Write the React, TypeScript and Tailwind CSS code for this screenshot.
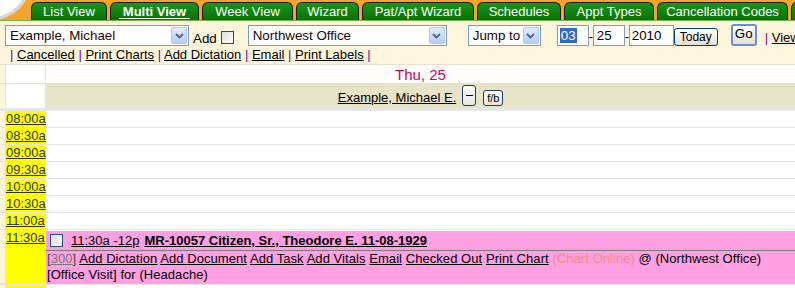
const tabs = [
  { label: 'List View', cls: 'w-[76px]' },
  { label: 'Multi View', cls: 'w-[89px] font-bold', active: true },
  { label: 'Week View', cls: 'w-[91px]' },
  { label: 'Wizard', cls: 'w-[63px]' },
  { label: 'Pat/Apt Wizard', cls: 'w-[112px]' },
  { label: 'Schedules', cls: 'w-[84px]' },
  { label: 'Appt Types', cls: 'w-[90px]' },
  { label: 'Cancellation Codes', cls: 'w-[131px]' },
  { label: '', cls: 'w-[60px]' },
];

const times = ['08:00a', '08:30a', '09:00a', '09:30a', '10:00a', '10:30a', '11:00a'];

const topLinks = ['Cancelled', 'Print Charts', 'Add Dictation', 'Email', 'Print Labels'];

const apptLinks = ['Add Dictation', 'Add Document', 'Add Task', 'Add Vitals', 'Email', 'Checked Out', 'Print Chart'];

function DropArrow() {
  return (
    <div className="w-[16px] h-[17px] mr-[1px] rounded-[2px] border border-[#b4c8f0] bg-linear-to-b from-[#e2ebfe] to-[#b6cbf7] flex items-center justify-center">
      <svg width="9" height="6" viewBox="0 0 9 6">
        <path d="M1 1 L4.5 4.5 L8 1" fill="none" stroke="#4d6185" strokeWidth="1.8" />
      </svg>
    </div>
  );
}

function FakeSelect({ value, width }: { value: string; width: string }) {
  return (
    <div className={`${width} h-[21px] shrink-0 border border-[#7f9db9] bg-white flex items-center justify-between pl-[4px]`}>
      <span className="text-[13.33px] text-[#1a0505] leading-none">{value}</span>
      <DropArrow />
    </div>
  );
}

function XpCheck() {
  return (
    <div className="w-[13px] h-[13px] shrink-0 border border-[#1c5180] bg-linear-to-br from-[#dcdcd7] to-[#ffffff]" />
  );
}

export default function App() {
  return (
    <div className="w-[795px] h-[288px] overflow-hidden bg-[#fdf6dd] font-['Liberation_Sans',Arial,sans-serif] text-[13px] text-black relative">
      {/* tab bar */}
      <div className="relative h-[21px] bg-[#f6a42c] border-b border-[#78b446] flex pl-[31px] gap-[3px]">
        <svg className="absolute left-0 top-0" width="32" height="21" viewBox="0 0 32 21">
          <circle cx="-8" cy="-19" r="39" fill="#d9d9d9" />
          <circle cx="-9" cy="-20" r="37" fill="#ffffff" />
        </svg>
        {tabs.map((t, i) => (
          <div
            key={i}
            className={`${t.cls} shrink-0 h-[18px] mt-[2px] rounded-t-[6px] border border-b-0 border-[#1b1b1b] bg-linear-to-b from-[#1b951b] to-[#067206] text-white flex items-center justify-center leading-none whitespace-nowrap`}
          >
            {t.active ? <span className="underline underline-offset-2">&nbsp;{t.label}&nbsp;</span> : t.label}
          </div>
        ))}
      </div>

      {/* controls row */}
      <div className="h-[26px] flex items-start pt-[4px] pl-[5px] whitespace-nowrap">
        <FakeSelect value="Example, Michael" width="w-[184px]" />
        <span className="ml-[4px] mt-[7px] text-[13.33px] leading-none">Add</span>
        <div className="ml-[4px] mt-[6px]">
          <XpCheck />
        </div>
        <div className="ml-[14px]">
          <FakeSelect value="Northwest Office" width="w-[199px]" />
        </div>
        <div className="ml-[21px]">
          <FakeSelect value="Jump to" width="w-[73px]" />
        </div>
        <div className="ml-[16px] w-[32px] h-[21px] shrink-0 border border-[#7f9db9] bg-white flex items-center pl-[2px]">
          <span className="bg-[#316ac5] text-white text-[13.33px] leading-[15px] px-[1px]">03</span>
        </div>
        <span className="w-[4px] shrink-0 text-center mt-[5px] leading-none">-</span>
        <div className="w-[32px] h-[21px] shrink-0 border border-[#7f9db9] bg-white flex items-center pl-[3px] text-[13.33px] leading-none">25</div>
        <span className="w-[4px] shrink-0 text-center mt-[5px] leading-none">-</span>
        <div className="w-[45px] h-[21px] shrink-0 border border-[#7f9db9] bg-white flex items-center pl-[2px] text-[13.33px] leading-none">2010</div>
        <div className="mt-[3px] w-[44px] h-[18px] shrink-0 rounded-[3px] border border-[#003c74] bg-linear-to-b from-[#ffffff] to-[#e3e0d2] flex items-center justify-center text-[12px] leading-none">Today</div>
        <div className="ml-[13px] -mt-[1px] w-[26px] h-[22px] shrink-0 rounded-[3px] border-2 border-[#6b8fd0] bg-linear-to-b from-[#ffffff] to-[#e3e0d2] flex items-center justify-center text-[13.33px] leading-none pb-[2px]">Go</div>
        <span className="ml-[8px] mt-[6px] leading-none">
          <span className="text-[#800080]">| </span>
          <span className="underline">View</span>
        </span>
      </div>

      {/* link row */}
      <div className="h-[17px] pl-[10px] leading-[16px] whitespace-nowrap">
        <span className="text-[#800080]">| </span>
        {topLinks.map((l) => (
          <span key={l}>
            <span className="underline">{l}</span>
            <span className="text-[#800080]"> | </span>
          </span>
        ))}
      </div>

      {/* schedule table */}
      <div className="flex flex-col">
        <div className="flex h-[20px] border-y border-[#e6e3d2]">
          <div className="w-[5px]" />
          <div className="w-[41px] bg-white border-x border-[#e6e6e6]" />
          <div className="flex-1 bg-[#fffefa] flex items-center justify-center text-[15px] text-[#cc0660] leading-none">Thu, 25</div>
        </div>
        <div className="flex h-[24px]">
          <div className="w-[5px]" />
          <div className="w-[41px] bg-white border-x border-[#e6e6e6]" />
          <div className="flex-1 bg-[#e7e3c6] flex items-end justify-center pb-[2px] whitespace-nowrap">
            <span className="underline leading-none mb-[2px]">Example, Michael E.</span>
            <div className="ml-[6px] w-[14px] h-[21px] rounded-[3px] border border-[#1d3c66] bg-linear-to-b from-[#ffffff] to-[#e6e4da] flex items-center justify-center">
              <div className="w-[7px] h-[1px] bg-black" />
            </div>
            <div className="ml-[7px] w-[20px] h-[16px] rounded-[3px] border border-[#1d3c66] bg-linear-to-b from-[#ffffff] to-[#e6e4da] flex items-center justify-center text-[11px] leading-none">f/b</div>
          </div>
        </div>
        <div className="h-[3px] bg-[#e6e6e6]" />
        {times.map((t) => (
          <div key={t} className="flex h-[17px] border-b border-[#e4e4e4]">
            <div className="w-[5px]" />
            <div className="w-[41px] border-x border-[#e4e4e4] bg-[#ffff00] text-[#333322] underline leading-[16px]">{t}</div>
            <div className="flex-1 bg-white" />
          </div>
        ))}
        <div className="flex h-[55px] border-b-2 border-[#e4e4e4]">
          <div className="w-[5px]" />
          <div className="w-[41px] border-x border-[#e4e4e4] bg-[#ffff00] text-[#333322] underline leading-[16px]">11:30a</div>
          <div className="flex-1 bg-white pt-[1px]">
            <div className="h-[53px] bg-[#ffa0e2] whitespace-nowrap">
              <div className="h-[20px] border-b border-[#7a7a7a] flex items-center pl-[4px]">
                <XpCheck />
                <span className="ml-[8px] underline leading-none">11:30a -12p</span>
                <span className="ml-[5px] font-bold underline leading-none">MR-10057 Citizen, Sr., Theodore E. 11-08-1929</span>
              </div>
              <div className="leading-[16px] pl-[1px] tracking-[0.06px]">
                <span className="text-[#444]">[</span>
                <span className="text-[#777] underline">300</span>
                <span className="text-[#444]">]</span>
                {apptLinks.map((l) => (
                  <span key={l}>
                    {' '}
                    <span className="underline">{l}</span>
                  </span>
                ))}
                <span className="text-[#f58a86]"> (Chart Online)</span>
                <span> @ (Northwest Office)</span>
              </div>
              <div className="leading-[16px] pl-[1px] tracking-[0.06px]">[Office Visit] for (Headache)</div>
            </div>
          </div>
        </div>
        <div className="flex h-[17px]">
          <div className="w-[5px]" />
          <div className="w-[41px] border-x border-[#e4e4e4] bg-[#ffff00]" />
          <div className="flex-1 bg-white" />
        </div>
      </div>
    </div>
  );
}
